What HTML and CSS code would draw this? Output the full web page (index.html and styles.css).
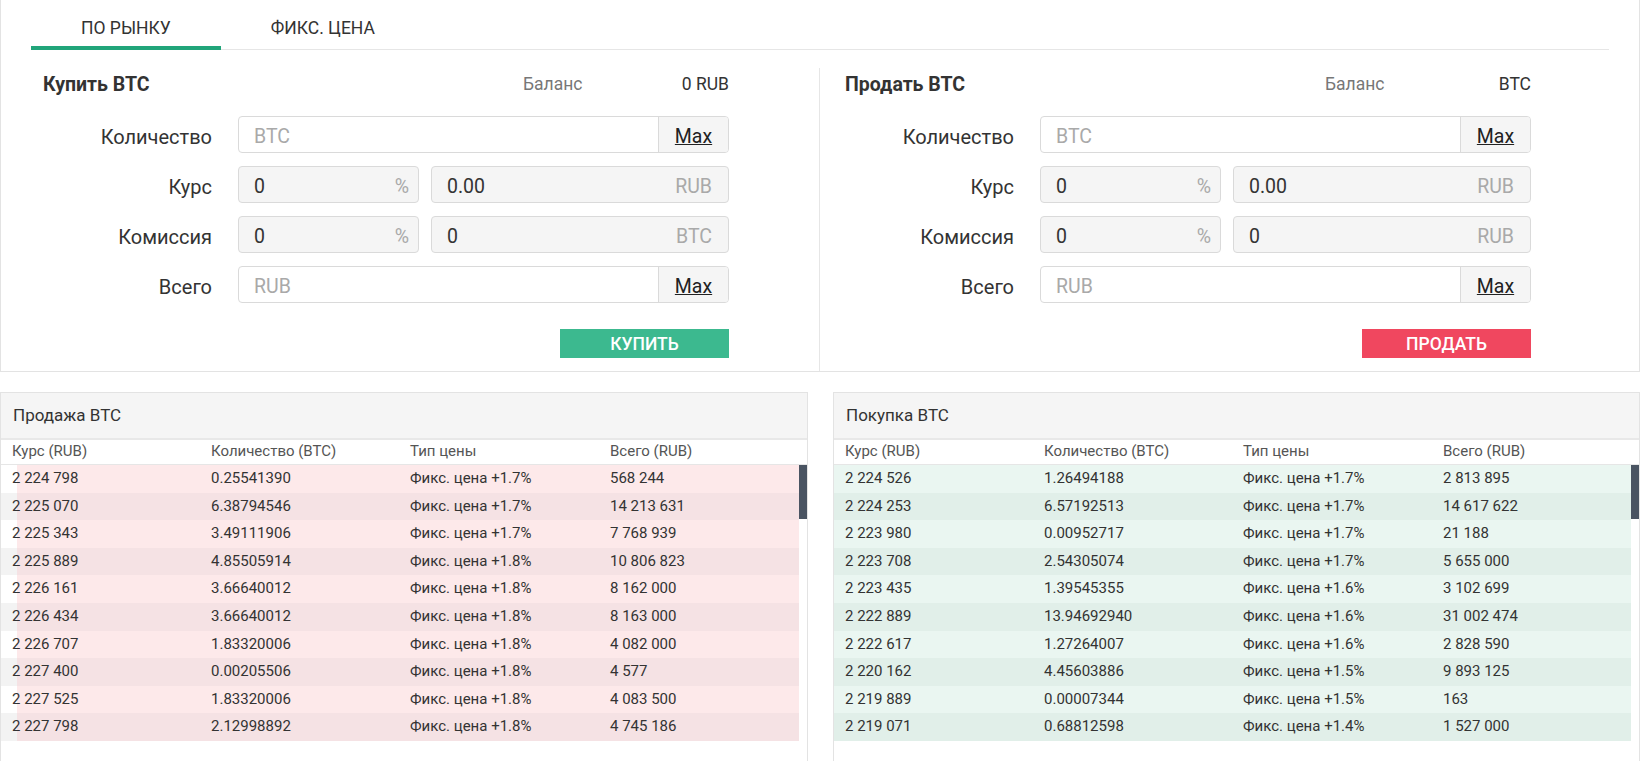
FILE: index.html
```html
<!DOCTYPE html>
<html lang="ru">
<head>
<meta charset="utf-8">
<title>Торговля BTC</title>
<link rel="stylesheet" href="styles.css">
</head>
<body>
<div class="page">
  <section class="trade-panel">
    <nav class="tabs">
      <div class="tab active">ПО РЫНКУ</div>
      <div class="tab">ФИКС. ЦЕНА</div>
    </nav>
    <div class="trade-grid">
      <div class="trade-col buy-col">
        <div class="form">
          <div class="form-head">
            <h2 class="form-title">Купить BTC</h2>
            <span class="bal-label">Баланс</span>
            <span class="bal-value">0 RUB</span>
          </div>
          <div class="row">
            <label class="row-label">Количество</label>
            <div class="field-group">
              <div class="field-input"><span class="ph">BTC</span></div>
              <div class="addon">Max</div>
            </div>
          </div>
          <div class="row">
            <label class="row-label">Курс</label>
            <div class="split">
              <div class="field ro small"><span class="val">0</span><span class="suffix">%</span></div>
              <div class="field ro"><span class="val">0.00</span><span class="suffix">RUB</span></div>
            </div>
          </div>
          <div class="row">
            <label class="row-label">Комиссия</label>
            <div class="split">
              <div class="field ro small"><span class="val">0</span><span class="suffix">%</span></div>
              <div class="field ro"><span class="val">0</span><span class="suffix">BTC</span></div>
            </div>
          </div>
          <div class="row">
            <label class="row-label">Всего</label>
            <div class="field-group">
              <div class="field-input"><span class="ph">RUB</span></div>
              <div class="addon">Max</div>
            </div>
          </div>
          <div class="actions"><button class="btn btn-buy">КУПИТЬ</button></div>
        </div>
      </div>
      <div class="trade-col sell-col">
        <div class="form">
          <div class="form-head">
            <h2 class="form-title">Продать BTC</h2>
            <span class="bal-label">Баланс</span>
            <span class="bal-value">BTC</span>
          </div>
          <div class="row">
            <label class="row-label">Количество</label>
            <div class="field-group">
              <div class="field-input"><span class="ph">BTC</span></div>
              <div class="addon">Max</div>
            </div>
          </div>
          <div class="row">
            <label class="row-label">Курс</label>
            <div class="split">
              <div class="field ro small"><span class="val">0</span><span class="suffix">%</span></div>
              <div class="field ro"><span class="val">0.00</span><span class="suffix">RUB</span></div>
            </div>
          </div>
          <div class="row">
            <label class="row-label">Комиссия</label>
            <div class="split">
              <div class="field ro small"><span class="val">0</span><span class="suffix">%</span></div>
              <div class="field ro"><span class="val">0</span><span class="suffix">RUB</span></div>
            </div>
          </div>
          <div class="row">
            <label class="row-label">Всего</label>
            <div class="field-group">
              <div class="field-input"><span class="ph">RUB</span></div>
              <div class="addon">Max</div>
            </div>
          </div>
          <div class="actions"><button class="btn btn-sell">ПРОДАТЬ</button></div>
        </div>
      </div>
    </div>
  </section>

  <div class="books">
    <section class="book book-sell">
      <div class="book-title">Продажа BTC</div>
      <div class="book-cols"><span>Курс (RUB)</span><span>Количество (BTC)</span><span>Тип цены</span><span>Всего (RUB)</span></div>
      <div class="book-body">
        <div class="order"><i class="bar" style="width:98%"></i><span>2 224 798</span><span>0.25541390</span><span>Фикс. цена +1.7%</span><span>568 244</span></div>
        <div class="order"><i class="bar" style="width:98%"></i><span>2 225 070</span><span>6.38794546</span><span>Фикс. цена +1.7%</span><span>14 213 631</span></div>
        <div class="order"><i class="bar" style="width:98%"></i><span>2 225 343</span><span>3.49111906</span><span>Фикс. цена +1.7%</span><span>7 768 939</span></div>
        <div class="order"><i class="bar" style="width:98%"></i><span>2 225 889</span><span>4.85505914</span><span>Фикс. цена +1.8%</span><span>10 806 823</span></div>
        <div class="order"><i class="bar" style="width:98%"></i><span>2 226 161</span><span>3.66640012</span><span>Фикс. цена +1.8%</span><span>8 162 000</span></div>
        <div class="order"><i class="bar" style="width:98%"></i><span>2 226 434</span><span>3.66640012</span><span>Фикс. цена +1.8%</span><span>8 163 000</span></div>
        <div class="order"><i class="bar" style="width:98%"></i><span>2 226 707</span><span>1.83320006</span><span>Фикс. цена +1.8%</span><span>4 082 000</span></div>
        <div class="order"><i class="bar" style="width:98%"></i><span>2 227 400</span><span>0.00205506</span><span>Фикс. цена +1.8%</span><span>4 577</span></div>
        <div class="order"><i class="bar" style="width:98%"></i><span>2 227 525</span><span>1.83320006</span><span>Фикс. цена +1.8%</span><span>4 083 500</span></div>
        <div class="order"><i class="bar" style="width:98%"></i><span>2 227 798</span><span>2.12998892</span><span>Фикс. цена +1.8%</span><span>4 745 186</span></div>
        <b class="thumb"></b>
      </div>
    </section>
    <section class="book book-buy">
      <div class="book-title">Покупка BTC</div>
      <div class="book-cols"><span>Курс (RUB)</span><span>Количество (BTC)</span><span>Тип цены</span><span>Всего (RUB)</span></div>
      <div class="book-body">
        <div class="order"><i class="bar" style="width:100%"></i><span>2 224 526</span><span>1.26494188</span><span>Фикс. цена +1.7%</span><span>2 813 895</span></div>
        <div class="order"><i class="bar" style="width:100%"></i><span>2 224 253</span><span>6.57192513</span><span>Фикс. цена +1.7%</span><span>14 617 622</span></div>
        <div class="order"><i class="bar" style="width:100%"></i><span>2 223 980</span><span>0.00952717</span><span>Фикс. цена +1.7%</span><span>21 188</span></div>
        <div class="order"><i class="bar" style="width:100%"></i><span>2 223 708</span><span>2.54305074</span><span>Фикс. цена +1.7%</span><span>5 655 000</span></div>
        <div class="order"><i class="bar" style="width:100%"></i><span>2 223 435</span><span>1.39545355</span><span>Фикс. цена +1.6%</span><span>3 102 699</span></div>
        <div class="order"><i class="bar" style="width:100%"></i><span>2 222 889</span><span>13.94692940</span><span>Фикс. цена +1.6%</span><span>31 002 474</span></div>
        <div class="order"><i class="bar" style="width:100%"></i><span>2 222 617</span><span>1.27264007</span><span>Фикс. цена +1.6%</span><span>2 828 590</span></div>
        <div class="order"><i class="bar" style="width:100%"></i><span>2 220 162</span><span>4.45603886</span><span>Фикс. цена +1.5%</span><span>9 893 125</span></div>
        <div class="order"><i class="bar" style="width:100%"></i><span>2 219 889</span><span>0.00007344</span><span>Фикс. цена +1.5%</span><span>163</span></div>
        <div class="order"><i class="bar" style="width:100%"></i><span>2 219 071</span><span>0.68812598</span><span>Фикс. цена +1.4%</span><span>1 527 000</span></div>
        <b class="thumb"></b>
      </div>
    </section>
  </div>
</div>
</body>
</html>
```

FILE: styles.css
```css
html, body {
  margin: 0;
  padding: 0;
  overflow: hidden;
  background: #fff;
}

body {
  font-family: Roboto, "Noto Sans", "Liberation Sans", sans-serif;
  color: #333;
}

.page {
  width: 1640px;
}

/* ---------- trade panel ---------- */
.trade-panel {
  border: 1px solid #e3e3e3;
  border-top: none;
}

.tabs {
  display: flex;
  height: 49px;
  margin: 0 30px;
  border-bottom: 1px solid #e6e6e6;
}

.tab {
  height: 20px;
  padding: 18px 50px 8px;
  font-size: 17.5px;
  line-height: 20px;
  color: #333;
  border-bottom: 4px solid transparent;
}

.tab.active {
  border-bottom-color: #21a57a;
}

.trade-grid {
  display: grid;
  grid-template-columns: 819px 1fr;
  margin-top: 18px;
}

.trade-col {
  box-sizing: border-box;
  padding: 4px 0 13px 42px;
}

.buy-col {
  border-right: 1px solid #e6e6e6;
}

.sell-col {
  padding-left: 25px;
}

.form {
  width: 686px;
}

.form-head {
  display: flex;
  align-items: center;
  height: 24px;
  margin-bottom: 20px;
}

.form-title {
  width: 480px;
  margin: 0;
  font-size: 19.5px;
  font-weight: 700;
  color: #333;
}

.bal-label {
  font-size: 17.5px;
  color: #777;
}

.bal-value {
  margin-left: auto;
  font-size: 17.5px;
  color: #333;
}

.row {
  display: grid;
  grid-template-columns: 169px 1fr;
  column-gap: 26px;
  align-items: center;
  height: 37px;
  margin-bottom: 13px;
}

.row-label {
  padding-top: 4px;
  text-align: right;
  font-size: 20px;
  color: #333;
}

.field-group {
  display: flex;
  box-sizing: border-box;
  height: 37px;
  border: 1px solid #dadada;
  border-radius: 4px;
  overflow: hidden;
  background: #fff;
}

.field-input {
  flex: 1;
  display: flex;
  align-items: center;
  padding: 3px 15px 0;
  font-size: 19.5px;
}

.ph {
  color: #a9a9a9;
}

.addon {
  width: 69px;
  display: flex;
  align-items: center;
  justify-content: center;
  padding-top: 3px;
  border-left: 1px solid #dadada;
  background: #f5f5f5;
  font-size: 19.5px;
  color: #222;
  text-decoration: underline;
}

.split {
  display: grid;
  grid-template-columns: 181px 1fr;
  column-gap: 12px;
}

.field {
  display: flex;
  align-items: center;
  justify-content: space-between;
  box-sizing: border-box;
  height: 37px;
  padding: 3px 16px 0 15px;
  border: 1px solid #dadada;
  border-radius: 4px;
  font-size: 19.5px;
}

.field.ro {
  background: #f5f5f5;
}

.field.small {
  padding-right: 9px;
}

.val {
  color: #333;
}

.suffix {
  color: #a9a9a9;
}

.actions {
  display: flex;
  justify-content: flex-end;
  margin-top: 26px;
}

.btn {
  width: 169px;
  height: 29px;
  border: none;
  padding: 0;
  font-family: inherit;
  font-size: 17.5px;
  font-weight: 500;
  color: #fff;
  cursor: pointer;
}

.btn-buy {
  background: #3cb98f;
}

.btn-sell {
  background: #f0475f;
}

/* ---------- order books ---------- */
.books {
  display: grid;
  grid-template-columns: 808px 807px;
  column-gap: 25px;
  margin-top: 20px;
}

.book {
  height: 370px;
  border: 1px solid #e3e3e3;
  border-bottom: none;
  overflow: hidden;
}

.book-title {
  padding: 11px 12px 12px;
  font-size: 17px;
  line-height: 22px;
  color: #333;
  background: #f5f5f5;
  border-bottom: 2px solid #e8e8e8;
}

.book-cols {
  display: grid;
  grid-template-columns: 199px 199px 200px 1fr;
  height: 24px;
  padding-left: 11px;
  font-size: 15px;
  line-height: 23px;
  color: #555;
  border-bottom: 1px solid #e6e6e6;
}

.book-body {
  position: relative;
  padding-right: 8px;
}

.order {
  position: relative;
  display: grid;
  grid-template-columns: 199px 199px 200px 1fr;
  height: 27.6px;
  padding-left: 11px;
  font-size: 15px;
  line-height: 27.6px;
  color: #333;
}

.order:nth-child(even) {
  background: #f3f3f3;
}

.order span {
  position: relative;
}

.bar {
  position: absolute;
  top: 0;
  bottom: 0;
}

.book-sell .bar {
  right: 0;
  background: #fde9ea;
}

.book-sell .order:nth-child(even) .bar {
  background: #f5e2e4;
}

.book-buy .bar {
  left: 0;
  background: #eaf6f1;
}

.book-buy .order:nth-child(even) .bar {
  background: #e1efe9;
}

.thumb {
  position: absolute;
  top: 0;
  right: 0;
  width: 8px;
  height: 54px;
  background: #4a5462;
}
```
